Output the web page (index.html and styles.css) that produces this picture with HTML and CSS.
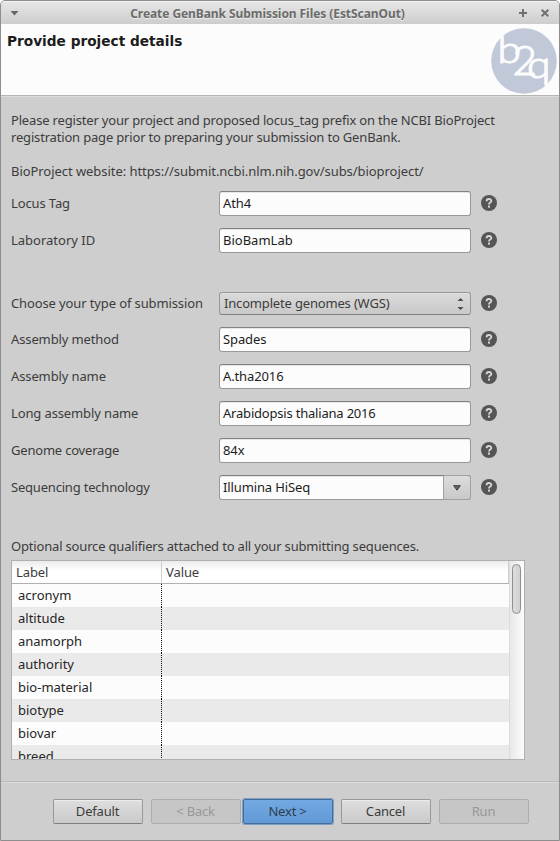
FILE: index.html
```html
<!DOCTYPE html>
<html lang="en">
<head>
<meta charset="utf-8">
<title>Create GenBank Submission Files (EstScanOut)</title>
<link rel="stylesheet" href="styles.css">
</head>
<body>
<svg width="0" height="0" class="defs">
  <symbol id="help" viewBox="0 0 16 16">
    <circle cx="8" cy="8" r="8" fill="#555"/>
    <path d="M5.6 6.2C5.6 3.2 10.3 3.3 10.3 5.9C10.3 7.7 8 7.5 8 9.4" fill="none" stroke="#d6d6d6" stroke-width="1.9"/>
    <rect x="7" y="10.6" width="2" height="2" fill="#d6d6d6"/>
  </symbol>
</svg>
<div class="window">
  <header class="titlebar">
    <svg class="tb-menu" width="9" height="5"><path d="M.5 0H8.5L4.5 4.5Z" fill="#666"/></svg>
    <h1><span>Create GenBank Submission Files (EstScanOut)</span></h1>
    <svg class="tb-max" width="8" height="8"><path d="M4 0V8M0 4H8" stroke="#707070" stroke-width="2"/></svg>
    <svg class="tb-close" width="8" height="8"><path d="M.7 .7L7.3 7.3M7.3 .7L.7 7.3" stroke="#707070" stroke-width="2"/></svg>
  </header>
  <section class="banner">
    <h2>Provide project details</h2>
    <svg class="logo" width="66" height="66" viewBox="0 0 66 66">
      <clipPath id="disc"><circle cx="33" cy="33" r="33"/></clipPath>
      <circle cx="33" cy="33" r="32.8" fill="#c1c9d9"/>
      <g clip-path="url(#disc)" class="logo-text">
        <text transform="translate(6.6 35) scale(1.12 1)" font-size="38">b</text>
        <text x="21.5" y="47.2" font-size="42">2</text>
        <text transform="translate(36 50) scale(1.12 1)" font-size="38">q</text>
      </g>
    </svg>
  </section>
  <main class="content">
    <p class="intro">Please register your project and proposed locus_tag prefix on the NCBI BioProject<br>registration page prior to preparing your submission to GenBank.</p>
    <p class="site">BioProject website: https://submit.ncbi.nlm.nih.gov/subs/bioproject/</p>
    <div class="form">
      <div class="row"><label>Locus Tag</label><div class="field">Ath4</div><svg class="help"><use href="#help"/></svg></div>
      <div class="row"><label class="wide">Laboratory ID</label><div class="field wide">BioBamLab</div><svg class="help"><use href="#help"/></svg></div>
      <div class="row row-select"><label>Choose your type of submission</label><div class="select"><span>Incomplete genomes (WGS)</span><svg width="7" height="12"><path d="M.5 3L3.5 0L6.5 3ZM.5 9L3.5 12L6.5 9Z" fill="#4a4a4a"/></svg></div><svg class="help"><use href="#help"/></svg></div>
      <div class="row"><label>Assembly method</label><div class="field">Spades</div><svg class="help"><use href="#help"/></svg></div>
      <div class="row"><label>Assembly name</label><div class="field">A.tha2016</div><svg class="help"><use href="#help"/></svg></div>
      <div class="row"><label>Long assembly name</label><div class="field tight">Arabidopsis thaliana 2016</div><svg class="help"><use href="#help"/></svg></div>
      <div class="row"><label class="tight">Genome coverage</label><div class="field">84x</div><svg class="help"><use href="#help"/></svg></div>
      <div class="row"><label class="tight">Sequencing technology</label><div class="field combo"><span>Illumina HiSeq</span><div class="drop"><svg width="8" height="6"><path d="M.7 .7H7.3L4 5.2Z" fill="#666" stroke="#3c3c3c"/></svg></div></div><svg class="help"><use href="#help"/></svg></div>
    </div>
    <p class="caption">Optional source qualifiers attached to all your submitting sequences.</p>
    <div class="table">
      <div class="grid">
        <div class="thead"><div>Label</div><div>Value</div></div>
        <div class="tr"><div>acronym</div></div>
        <div class="tr"><div>altitude</div></div>
        <div class="tr"><div>anamorph</div></div>
        <div class="tr"><div>authority</div></div>
        <div class="tr"><div>bio-material</div></div>
        <div class="tr"><div>biotype</div></div>
        <div class="tr"><div>biovar</div></div>
        <div class="tr"><div>breed</div></div>
      </div>
      <div class="scroll"><div class="thumb"></div></div>
    </div>
  </main>
  <footer class="actions">
    <div class="btn">Default</div>
    <div class="btn disabled">&lt; Back</div>
    <div class="btn primary">Next &gt;</div>
    <div class="btn">Cancel</div>
    <div class="btn disabled">Run</div>
  </footer>
</div>
</body>
</html>
```
FILE: styles.css
```css
* { box-sizing: border-box; margin: 0; padding: 0; }
body { width: 560px; height: 841px; overflow: hidden; background: #fff; font: 13px/17px "Noto Sans", sans-serif; color: #3c3c3c; }
svg { display: block; flex: none; }
.defs { position: absolute; }
.window { width: 560px; height: 841px; display: flex; flex-direction: column; border: 1px solid #8e8e8e; border-radius: 5px 5px 0 0; background: #cecece; overflow: hidden; }
.titlebar { height: 23px; flex: none; display: flex; align-items: center; padding: 0 10px 0 9px; background: linear-gradient(#e6e6e6, #cdcdcd); border-top: 1px solid #f2f2f2; }
.titlebar h1 { flex: 1; text-align: center; font: bold 12px/20px "Noto Sans", sans-serif; letter-spacing: -.07px; color: #6b6b6b; text-shadow: 0 1px 0 #eee; white-space: nowrap; padding: 1px 3px 0 0; }
.tb-max { margin-right: 14px; }
.banner { height: 71px; flex: none; display: flex; justify-content: space-between; background: #fcfcfc; padding: 4px 2px 0 6px; }
.banner h2 { font: bold 13.7px/16px "DejaVu Sans", sans-serif; color: #1c1c1c; margin-top: 5px; }
.logo-text { fill: #fcfcfc; stroke: #fcfcfc; stroke-width: 1.2px; font-family: Lato, sans-serif; font-weight: 300; }
.content { height: 686px; flex: none; border-top: 1px solid #b4b4b4; box-shadow: inset 0 1px #dcdcdc; padding: 16px 0 0 10px; white-space: nowrap; }
.intro, .caption { letter-spacing: -.175px; }
.site { margin-top: 17px; letter-spacing: -.055px; }
.form { margin-top: 11px; display: flex; flex-direction: column; gap: 12px; letter-spacing: -.12px; }
.wide { letter-spacing: 0; }
.tight { letter-spacing: -.2px; }
.row { display: grid; grid-template-columns: 208px 252px 26px; align-items: center; height: 25px; }
.row .help { width: 16px; height: 16px; margin: 0 0 1px 10px; }
.row-select { height: 23px; margin-top: 27px; }
.field { height: 25px; border: 1px solid #999; border-top-color: #808080; border-radius: 3px; background: #fcfcfc; box-shadow: inset 0 1px #e6e6e6; padding: 3px 3px; color: #1c1c1c; }
.select { height: 23px; display: flex; justify-content: space-between; align-items: center; padding: 0 6px 0 4px; border: 1px solid #999; border-bottom-color: #808080; border-radius: 3px; background: linear-gradient(#dadada, #c9c9c9); box-shadow: inset 0 1px #e2e2e2; letter-spacing: -.17px; }
.combo { display: flex; justify-content: space-between; padding-right: 0; }
.drop { width: 28px; height: 25px; margin: -4px -1px 0 0; display: flex; align-items: center; justify-content: center; border: 1px solid #a0a0a0; border-radius: 0 3px 3px 0; background: linear-gradient(#dcdcdc, #c9c9c9); }
.caption { margin-top: 38px; }
.table { margin-top: 5px; width: 514px; height: 200px; display: flex; border: 1px solid #b0b0b0; background: #fcfcfc; overflow: hidden; color: #262626; }
.grid { width: 497px; }
.thead { height: 23px; display: flex; border-bottom: 1px solid #b0b0b0; background: linear-gradient(#ececec, #fff 45%); line-height: 22px; color: #3c3c3c; }
.thead div { width: 150px; padding-left: 4px; border-right: 1px solid #d0d0d0; letter-spacing: -.1px; }
.thead div + div { width: 347px; }
.tr { height: 23px; line-height: 23px; }
.tr:nth-child(odd) { background: #eaeaea; }
.tr div { width: 150px; height: 23px; padding-left: 6px; background: linear-gradient(#111 50%, transparent 50%) 149px 0 / 1px 2px repeat-y; }
.scroll { width: 15px; border-left: 1px solid #dcdcdc; background: linear-gradient(90deg, #e8e8e8, #fcfcfc); padding: 3px 0 0 2px; }
.thumb { width: 9px; height: 50px; border: 1px solid #8f8f8f; border-radius: 5px; background: linear-gradient(90deg, #dedede, #d0d0d0); }
.actions { flex: 1; display: flex; align-items: flex-start; padding: 17px 0 0 52px; gap: 8px; border-top: 1px solid #b9b9b9; box-shadow: inset 0 1px #dcdcdc; }
.btn { width: 90px; height: 25px; line-height: 23px; text-align: center; letter-spacing: -.2px; padding-right: 1px; border: 1px solid #999; border-bottom-color: #808080; border-radius: 2px; background: linear-gradient(#dedede, #cacaca); box-shadow: inset 0 1px #ededed; }
.btn.disabled { color: #989898; background: #c6c6c6; border-color: #adadad; box-shadow: none; }
.btn.primary { margin-left: -6px; background: linear-gradient(#74a8e2, #609ad6); border-color: #466c9c; box-shadow: 0 0 0 1px #7da0c0; color: #2c3e50; }
```
